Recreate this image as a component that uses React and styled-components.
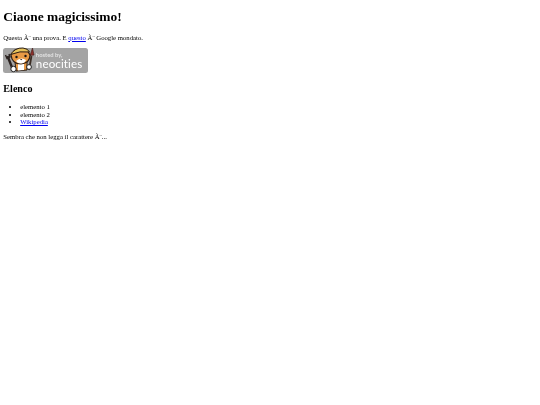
import React from "react"
import styled, { createGlobalStyle } from "styled-components"

const GlobalStyle = createGlobalStyle`
  html, body {
    margin: 0;
    padding: 0;
    background: #fff;
  }
  body {
    font-family: "Liberation Serif", "Times New Roman", serif;
    font-size: 6.72px;
    color: #000;
  }
`

const Page = styled.main`
  padding: 0 3.36px;
  display: flow-root;
  will-change: transform;
`

const Title = styled.h1`
  font-size: 13.44px;
  line-height: 15.5px;
  font-weight: bold;
  margin: 9px 0;
`

const Text = styled.p`
  margin: 0 0 6.72px;
  line-height: 7.73px;
`

const Link = styled.a`
  color: #0000ee;
  text-decoration: underline;
`

const Badge = styled.div`
  position: relative;
  display: flex;
  flex-direction: column;
  align-items: flex-start;
  width: 84.5px;
  height: 25px;
  box-sizing: border-box;
  padding: 4px 0 0 32.5px;
  background: #a4a4a4;
  border-radius: 2.5px;
  margin-bottom: 10px;
  font-family: Lato, "Liberation Sans", sans-serif;
  color: #fff;
`

const BadgeSmall = styled.span`
  font-size: 5.8px;
  line-height: 6px;
  font-weight: bold;
  color: #e2e2e2;
`

const BadgeLarge = styled.span`
  font-size: 11.6px;
  line-height: 12px;
  letter-spacing: 0.1px;
`

const Mascot = styled.svg`
  position: absolute;
  left: 0;
  top: -1px;
  width: 32px;
  height: 27px;
`

const Subtitle = styled.h2`
  font-size: 10.08px;
  line-height: 11.6px;
  font-weight: bold;
  margin: 0 0 8.4px;
`

const List = styled.ul`
  margin: 0 0 6.72px;
  padding-left: 16.8px;
  line-height: 7.73px;
`

const Item = styled.li``

export default function App() {
  return (
    <Page>
      <GlobalStyle />
      <Title>Ciaone magicissimo!</Title>
      <Text>
        Questa Ã¨ una prova. E <Link href="#">questo</Link> Ã¨ Google mondato.
      </Text>
      <Badge>
        <Mascot viewBox="0 0 32 27">
          {/* wrench */}
          <path d="M4.5 9 L10 23" stroke="#2b2320" strokeWidth="2.4" />
          <path d="M2.5 8 L4 11.5 L7 10 L6 7" fill="none" stroke="#2b2320" strokeWidth="1.4" />
          {/* brush */}
          <path d="M28.5 9 L26 23" stroke="#3a2b22" strokeWidth="1.8" />
          <path d="M29.5 1 L31 8 L27 8.5 Z" fill="#8c2f2b" stroke="#3d1c1a" strokeWidth=".6" />
          {/* body */}
          <path d="M12 15 L24 14 L24 23 L13 24 Z" fill="#e89a45" stroke="#2b1d14" strokeWidth="1" />
          <path d="M15 17 L21 17 L21 23 L15 23.5 Z" fill="#fff" />
          {/* head */}
          <path d="M8 8 L12 3 Q18 1 24 3 L27 8 Q27 16 18 17 Q9 17 8 8 Z" fill="#e89a45" stroke="#2b1d14" strokeWidth="1.2" />
          {/* hard hat */}
          <path d="M7.5 7.5 Q12 0.5 20 1 Q25 1.5 26.5 5 Q17 3.5 7.5 7.5 Z" fill="#e6c25a" stroke="#2b1d14" strokeWidth="1" />
          {/* face */}
          <path d="M13 14 Q18 9.5 23 13 Q21.5 16.5 18 16.5 Q14.5 16.5 13 14 Z" fill="#fff" />
          <circle cx="13.5" cy="10" r="1.2" fill="#1b1410" />
          <circle cx="22.5" cy="9" r="1.2" fill="#1b1410" />
          <path d="M17 12 h2.4 l-1.2 1.2 Z" fill="#2b1d14" />
          {/* hands */}
          <circle cx="10.5" cy="22" r="2.7" fill="#fff" stroke="#222" strokeWidth="1" />
          <circle cx="26" cy="20" r="2.4" fill="#fff" stroke="#222" strokeWidth="1" />
        </Mascot>
        <BadgeSmall>hosted by,</BadgeSmall>
        <BadgeLarge>neocities</BadgeLarge>
      </Badge>
      <Subtitle>Elenco</Subtitle>
      <List>
        <Item>elemento 1</Item>
        <Item>elemento 2</Item>
        <Item>
          <Link href="#">Wikipedia</Link>
        </Item>
      </List>
      <Text>Sembra che non legga il carattere Ã¨...</Text>
    </Page>
  )
}
